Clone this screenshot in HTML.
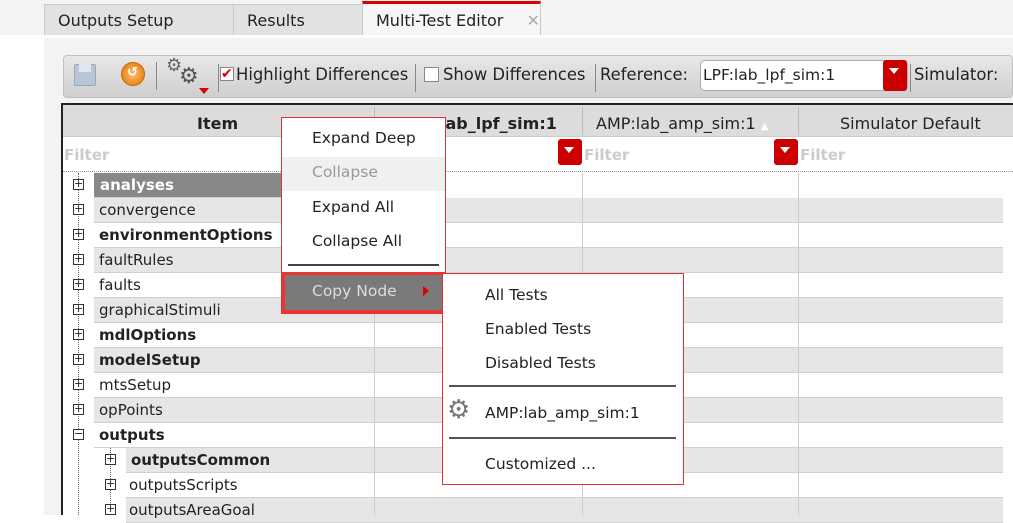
<!DOCTYPE html>
<html><head><style>
*{box-sizing:border-box;margin:0;padding:0}
body{width:1013px;height:515px;overflow:hidden;background:#fff;font-family:"DejaVu Sans","Liberation Sans",sans-serif;font-size:15px;color:#222;position:relative}
.abs{position:absolute;white-space:nowrap}
.tab{position:absolute;top:4px;height:31px;background:#e2e2e2;border:1px solid #c8c8c8;border-bottom:none;padding:6px 0 0 13px;font-size:16px;white-space:nowrap}
.row{position:absolute;left:63px;width:940px;height:25px}
.row .bg{position:absolute;left:31px;top:0;right:0;height:25px;border-bottom:1px solid #d0d0d0}
.row .t{position:absolute;left:36px;top:3px;white-space:nowrap}
.pl{position:absolute;left:10px;top:6px;width:11px;height:11px;border:1px solid #333;background:#fff;font-size:11px;line-height:8px;text-align:center}
.b{font-weight:bold}
.mi{position:absolute;left:30px;font-size:15.5px;white-space:nowrap}
.dd{position:absolute;width:22px;height:22px;background:#c00;border-radius:3px}
.dd:after{content:"";position:absolute;left:6px;top:8px;border-left:5px solid transparent;border-right:5px solid transparent;border-top:6px solid #fff}
</style></head><body>
<div class="abs" style="left:0;top:0;width:1013px;height:35px;background:#f4f4f4"></div>
<div class="tab" style="left:44px;width:190px">Outputs Setup</div>
<div class="tab" style="left:233px;width:130px">Results</div>
<div class="tab" style="left:362px;width:179px;top:1px;height:34px;background:#f6f6f6;border-top:3px solid #d00;padding-top:7px">Multi-Test Editor <span style="color:#aaa;margin-left:18px;font-weight:bold">✕</span></div>
<div class="abs" style="left:44px;top:38px;width:969px;height:477px;background:#f3f3f3"></div>
<!-- toolbar -->
<div class="abs" style="left:63px;top:55px;width:950px;height:43px;background:linear-gradient(#e8e8e8,#cfcfcf);border-radius:4px;border:1px solid #c0c0c0"></div>
<div class="abs" style="left:74px;top:64px;width:22px;height:22px;background:#b8c4d8;border:1px solid #9aa;border-radius:2px"></div>
<div class="abs" style="left:79px;top:64px;width:12px;height:8px;background:#e0e6f0"></div>
<div class="abs" style="left:121px;top:62px;width:24px;height:24px;border-radius:50%;background:radial-gradient(#ffc070,#e07000);border:1px solid #c60"></div>
<div class="abs" style="left:127px;top:65px;color:#fff;font-size:13px;font-weight:bold">↺</div>
<div class="abs" style="left:156px;top:62px;width:1px;height:28px;background:#888"></div>
<div class="abs" style="left:166px;top:55px;font-size:18px;color:#666">⚙</div>
<div class="abs" style="left:179px;top:64px;font-size:22px;color:#555">⚙</div>
<div class="abs" style="left:199px;top:88px;border-left:5px solid transparent;border-right:5px solid transparent;border-top:6px solid #d00"></div>
<div class="abs" style="left:218px;top:64px;width:1px;height:28px;background:#888"></div>
<div class="abs" style="left:220px;top:67px;width:14px;height:14px;background:#fff;border:1px solid #888;color:#d00;font-size:14px;line-height:12px;font-weight:bold">✔</div>
<div class="abs" style="left:236px;top:65px;font-size:16.4px">Highlight Differences</div>
<div class="abs" style="left:415px;top:64px;width:1px;height:28px;background:#888"></div>
<div class="abs" style="left:424px;top:67px;width:15px;height:15px;background:#fff;border:1px solid #888"></div>
<div class="abs" style="left:443px;top:65px;font-size:16.4px">Show Differences</div>
<div class="abs" style="left:595px;top:64px;width:1px;height:28px;background:#888"></div>
<div class="abs" style="left:600px;top:65px;font-size:16.4px">Reference:</div>
<div class="abs" style="left:700px;top:60px;width:208px;height:31px;background:#fff;border:1px solid #aaa;border-radius:5px;padding:5px 0 0 2px;font-size:15.5px">LPF:lab_lpf_sim:1</div>
<div class="dd" style="left:883px;top:60px;width:24px;height:31px"></div>
<div class="abs" style="left:910px;top:64px;width:1px;height:28px;background:#888"></div>
<div class="abs" style="left:914px;top:65px;font-size:16.4px">Simulator:</div>
<!-- table -->
<div class="abs" style="left:61px;top:103px;width:952px;height:412px;background:#fff;border-left:2px solid #222;border-top:2px solid #222"></div>
<div class="abs" style="left:63px;top:105px;width:950px;height:32px;background:#dcdcdc;border-bottom:1px solid #ccc"></div>
<div class="abs b" style="left:197px;top:114px;font-size:16px">Item</div>
<div class="abs" style="left:374px;top:107px;width:1px;height:28px;background:#bbb"></div>
<div class="abs" style="left:582px;top:107px;width:1px;height:28px;background:#bbb"></div>
<div class="abs" style="left:798px;top:107px;width:1px;height:28px;background:#bbb"></div>
<div class="abs b" style="left:440px;top:114px;font-size:16px">lab_lpf_sim:1</div>
<div class="abs" style="left:596px;top:114px;font-size:16px">AMP:lab_amp_sim:1 <span style="font-size:10px;color:#fff">▲</span></div>
<div class="abs" style="left:840px;top:114px;font-size:16px">Simulator Default</div>
<div class="abs b" style="left:64px;top:146px;color:#ccc;font-size:15px">Filter</div>
<div class="abs b" style="left:584px;top:146px;color:#ccc;font-size:15px">Filter</div>
<div class="abs b" style="left:800px;top:146px;color:#ccc;font-size:15px">Filter</div>
<div class="dd" style="left:558px;top:139px;width:24px;height:26px"></div>
<div class="dd" style="left:774px;top:139px;width:24px;height:26px"></div>
<div class="abs" style="left:63px;top:171px;width:950px;border-top:1px dotted #999"></div>
<div class="abs" style="left:78px;top:173px;width:0;height:342px;border-left:1px dotted #666"></div>
<div class="abs" style="left:110px;top:448px;width:0;height:67px;border-left:1px dotted #666"></div>

<div class="row" style="top:173px"><div class="bg" style="background:#888;right:628px"></div><div class="pl">+</div><div class="t b" style="color:#fff;left:37px">analyses</div></div>
<div class="row" style="top:198px"><div class="bg" style="background:#e6e6e6"></div><div class="pl">+</div><div class="t">convergence</div></div>
<div class="row" style="top:223px"><div class="bg"></div><div class="pl">+</div><div class="t b">environmentOptions</div></div>
<div class="row" style="top:248px"><div class="bg" style="background:#e6e6e6"></div><div class="pl">+</div><div class="t">faultRules</div></div>
<div class="row" style="top:273px"><div class="bg"></div><div class="pl">+</div><div class="t">faults</div></div>
<div class="row" style="top:298px"><div class="bg" style="background:#e6e6e6"></div><div class="pl">+</div><div class="t">graphicalStimuli</div></div>
<div class="row" style="top:323px"><div class="bg"></div><div class="pl">+</div><div class="t b">mdlOptions</div></div>
<div class="row" style="top:348px"><div class="bg" style="background:#e6e6e6"></div><div class="pl">+</div><div class="t b">modelSetup</div></div>
<div class="row" style="top:373px"><div class="bg"></div><div class="pl">+</div><div class="t">mtsSetup</div></div>
<div class="row" style="top:398px"><div class="bg" style="background:#e6e6e6"></div><div class="pl">+</div><div class="t">opPoints</div></div>
<div class="row" style="top:423px"><div class="bg"></div><div class="pl">−</div><div class="t b">outputs</div></div>
<div class="row" style="top:448px"><div class="bg" style="background:#e6e6e6;left:63px"></div><div class="pl" style="left:42px">+</div><div class="t b" style="left:68px">outputsCommon</div></div>
<div class="row" style="top:473px"><div class="bg" style="left:63px"></div><div class="pl" style="left:42px">+</div><div class="t" style="left:66px">outputsScripts</div></div>
<div class="row" style="top:498px"><div class="bg" style="background:#e6e6e6;left:63px"></div><div class="pl" style="left:42px">+</div><div class="t" style="left:66px">outputsAreaGoal</div></div>
<div class="abs" style="left:374px;top:173px;width:1px;height:342px;background:#ccc"></div>
<div class="abs" style="left:582px;top:173px;width:1px;height:342px;background:#ccc"></div>
<div class="abs" style="left:798px;top:173px;width:1px;height:342px;background:#ccc"></div>

<!-- menu 1 -->
<div class="abs" style="left:281px;top:117px;width:165px;height:197px;background:#fff;border:1px solid #d33">
<div class="mi" style="top:11px">Expand Deep</div>
<div class="abs" style="left:0;top:39px;width:163px;height:34px;background:#f0f0f0"></div>
<div class="mi" style="top:45px;color:#999">Collapse</div>
<div class="mi" style="top:80px">Expand All</div>
<div class="mi" style="top:114px">Collapse All</div>
<div class="abs" style="left:6px;top:146px;width:151px;height:2px;background:#444"></div>
<div class="abs" style="left:0;top:154px;width:163px;height:41px;border:3px solid #e33;background:#7a7a7a"></div>
<div class="mi" style="top:164px;color:#ddd">Copy Node</div>
<div class="abs" style="left:141px;top:168px;border-top:5px solid transparent;border-bottom:5px solid transparent;border-left:6px solid #d00"></div>
</div>
<!-- submenu -->
<div class="abs" style="left:442px;top:273px;width:242px;height:212px;background:#fff;border:1px solid #d33">
<div class="mi" style="left:42px;top:12px">All Tests</div>
<div class="mi" style="left:42px;top:46px">Enabled Tests</div>
<div class="mi" style="left:42px;top:80px">Disabled Tests</div>
<div class="abs" style="left:6px;top:111px;width:227px;height:2px;background:#555"></div>
<div class="abs" style="left:4px;top:121px;font-size:26px;color:#777">⚙</div>
<div class="mi" style="left:42px;top:130px">AMP:lab_amp_sim:1</div>
<div class="abs" style="left:6px;top:163px;width:227px;height:2px;background:#555"></div>
<div class="mi" style="left:42px;top:181px">Customized ...</div>
</div>
</body></html>
